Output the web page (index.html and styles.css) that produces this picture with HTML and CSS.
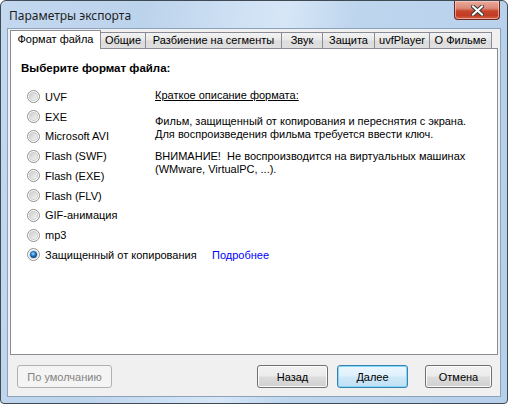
FILE: index.html
```html
<!DOCTYPE html>
<html lang="ru">
<head>
<meta charset="utf-8">
<title>Параметры экспорта</title>
<link rel="stylesheet" href="styles.css">
</head>
<body>
<div class="window">
  <div class="titlebar">
    <span class="title">Параметры экспорта</span>
    <button class="close" aria-label="Закрыть">
      <svg width="13" height="11" viewBox="0 0 13 11">
        <path d="M2 1.5 L11 9.5 M11 1.5 L2 9.5" stroke="#3a3a3a" stroke-width="4" stroke-linecap="square" fill="none"/>
        <path d="M2 1.5 L11 9.5 M11 1.5 L2 9.5" stroke="#ffffff" stroke-width="2" stroke-linecap="square" fill="none"/>
      </svg>
    </button>
  </div>
  <div class="client">
    <div class="tabs">
      <div class="tab active t-format">Формат файла</div>
      <div class="tab t-common">Общие</div>
      <div class="tab t-split">Разбиение на сегменты</div>
      <div class="tab t-sound">Звук</div>
      <div class="tab t-protect">Защита</div>
      <div class="tab t-player">uvfPlayer</div>
      <div class="tab t-movie">О Фильме</div>
    </div>
    <div class="pane">
      <div class="heading">Выберите формат файла:</div>
      <div class="content">
        <ul class="options">
          <li class="opt"><span class="radio"></span><span class="label">UVF</span></li>
          <li class="opt"><span class="radio"></span><span class="label">EXE</span></li>
          <li class="opt"><span class="radio"></span><span class="label">Microsoft AVI</span></li>
          <li class="opt"><span class="radio"></span><span class="label">Flash (SWF)</span></li>
          <li class="opt"><span class="radio"></span><span class="label">Flash (EXE)</span></li>
          <li class="opt"><span class="radio"></span><span class="label">Flash (FLV)</span></li>
          <li class="opt"><span class="radio"></span><span class="label">GIF-анимация</span></li>
          <li class="opt"><span class="radio"></span><span class="label">mp3</span></li>
          <li class="opt"><span class="radio checked"></span><span class="label label-wide">Защищенный от копирования</span><a class="link" href="#">Подробнее</a></li>
        </ul>
        <div class="desc">
          <p class="desc-title">Краткое описание формата:</p>
          <p class="desc-p1">Фильм, защищенный от копирования и переснятия с экрана.<br>Для воспроизведения фильма требуется ввести ключ.</p>
          <p class="desc-p2">ВНИМАНИЕ!&nbsp; Не воспроизводится на виртуальных машинах<br>(WMware, VirtualPC, ...).</p>
        </div>
      </div>
    </div>
    <div class="footer">
      <button class="btn disabled b-default">По умолчанию</button>
      <div class="nav">
        <button class="btn b-back">Назад</button>
        <button class="btn primary b-next">Далее</button>
        <button class="btn b-cancel">Отмена</button>
      </div>
    </div>
  </div>
</div>
</body>
</html>
```

FILE: styles.css
```css
* { box-sizing: border-box; }
html, body { margin: 0; padding: 0; background: #ffffff; }
body {
  width: 508px;
  height: 404px;
  overflow: hidden;
  font-family: "Liberation Sans", Arial, sans-serif;
  font-size: 11px;
  color: #000;
}

.window {
  width: 508px;
  height: 404px;
  border: 1px solid #3f4a55;
  border-radius: 6px 6px 4px 4px;
  padding: 0 6px 6px 6px;
  background: linear-gradient(100deg, #c3d8ef 0%, #bcd3ec 25%, #cfe1f4 42%, #d6e6f7 50%, #bed5ee 62%, #b6cfea 100%);
  display: flex;
  flex-direction: column;
}

.titlebar {
  height: 27px;
  display: flex;
  align-items: flex-start;
  justify-content: space-between;
}
.title {
  font-family: "Noto Sans", "Open Sans", sans-serif;
  font-size: 12px;
  line-height: 16px;
  margin: 7px 0 0 2px;
  color: #1e1e1e;
}
.close {
  width: 46px;
  height: 19px;
  margin: 0 1px 0 0;
  padding: 0;
  border: 1px solid #6b2a22;
  border-top: none;
  border-radius: 0 0 4px 4px;
  background: linear-gradient(#e9a99b 0%, #dc8a78 40%, #c8472f 55%, #c23a22 80%, #d2664c 100%);
  box-shadow: inset 0 0 0 1px rgba(255, 220, 210, 0.55);
  display: flex;
  align-items: center;
  justify-content: center;
}
.close svg { display: block; }

.client {
  flex: 1;
  border: 1px solid #8ca2bb;
  background: #f0f0f0;
  display: flex;
  flex-direction: column;
  padding: 1px 2px 8px 2px;
}

.tabs {
  height: 18px;
  display: flex;
  align-items: flex-end;
  position: relative;
  z-index: 1;
}
.tab {
  height: 16px;
  border: 1px solid #898c95;
  border-bottom: none;
  border-left: none;
  background: linear-gradient(#f3f3f3 0%, #e8e8e8 45%, #dcdcdc 55%, #dfdfdf 100%);
  text-align: center;
  line-height: 14px;
  white-space: nowrap;
}
.tab.active {
  height: 19px;
  margin-bottom: -1px;
  border-left: 1px solid #898c95;
  background: #ffffff;
  line-height: 17px;
}
.t-format { width: 91px; }
.t-common { width: 45px; }
.t-split { width: 136px; }
.t-sound { width: 41px; }
.t-protect { width: 52px; }
.t-player { width: 55px; }
.t-movie { width: 62px; }

.pane {
  height: 307px;
  border: 1px solid #898c95;
  background: #ffffff;
  padding: 13px 10px 0 10px;
}
.heading {
  font-weight: bold;
  line-height: 13px;
  font-size: 11.5px;
}
.content {
  display: flex;
  margin-top: 12px;
}
.options {
  list-style: none;
  margin: 0 0 0 6px;
  padding: 0;
  width: 128px;
  flex: none;
}
.opt {
  height: 19.75px;
  display: flex;
  align-items: center;
  white-space: nowrap;
}
.opt > * { flex: none; }
.radio {
  width: 13px;
  height: 13px;
  border-radius: 50%;
  border: 1px solid #8e8f8f;
  background: #ffffff;
  margin-right: 5px;
  position: relative;
}
.radio::after {
  content: "";
  position: absolute;
  left: 1px;
  top: 1px;
  width: 9px;
  height: 9px;
  border-radius: 50%;
  background: linear-gradient(135deg, #c7c7c7 0%, #e4e4e4 55%, #f7f7f7 100%);
  box-shadow: inset 0 0 0 1px #d2d2d2;
}
.radio.checked::after {
  left: 2px;
  top: 2px;
  width: 7px;
  height: 7px;
  background: radial-gradient(circle at 45% 40%, #a9e4ff 0, #3b93df 1.6px, #155aa8 3px, #0d3a78 4px);
  box-shadow: 0 0 0 1px #d7d7d7;
}
.label-wide {
  display: inline-block;
  width: 167px;
}
.link {
  color: #0000ff;
  text-decoration: none;
}

.desc {
  padding-top: 2px;
}
.desc p {
  margin: 0;
  line-height: 13px;
  white-space: nowrap;
}
.desc-title { text-decoration: underline; }
.desc-p1 { margin-top: 13px !important; }
.desc-p2 { margin-top: 9px !important; }

.footer {
  margin-top: 10px;
  height: 23px;
  display: flex;
  padding: 0 6px 0 7px;
}
.nav {
  margin-left: auto;
  display: flex;
}
.btn {
  height: 23px;
  font-family: "Liberation Sans", Arial, sans-serif;
  font-size: 11px;
  color: #000;
  border: 1px solid #707070;
  border-radius: 3px;
  background: linear-gradient(#f2f2f2 0%, #ebebeb 48%, #dddddd 52%, #cfcfcf 100%);
  box-shadow: inset 0 0 0 1px #fbfbfb;
  padding: 0;
}
.btn.disabled {
  border-color: #adb2b5;
  background: #f4f4f4;
  color: #838383;
  box-shadow: none;
}
.btn.primary {
  border-color: #3c7fb1;
  background: linear-gradient(#eaf6fd 0%, #dff1fc 48%, #cfe9f8 52%, #bfe0f3 100%);
  box-shadow: inset 0 0 0 1px #7fd9f7;
}
.b-default { width: 95px; }
.b-back { width: 71px; }
.b-next { width: 71px; margin-left: 9px; }
.b-cancel { width: 67px; margin-left: 17px; }
```
